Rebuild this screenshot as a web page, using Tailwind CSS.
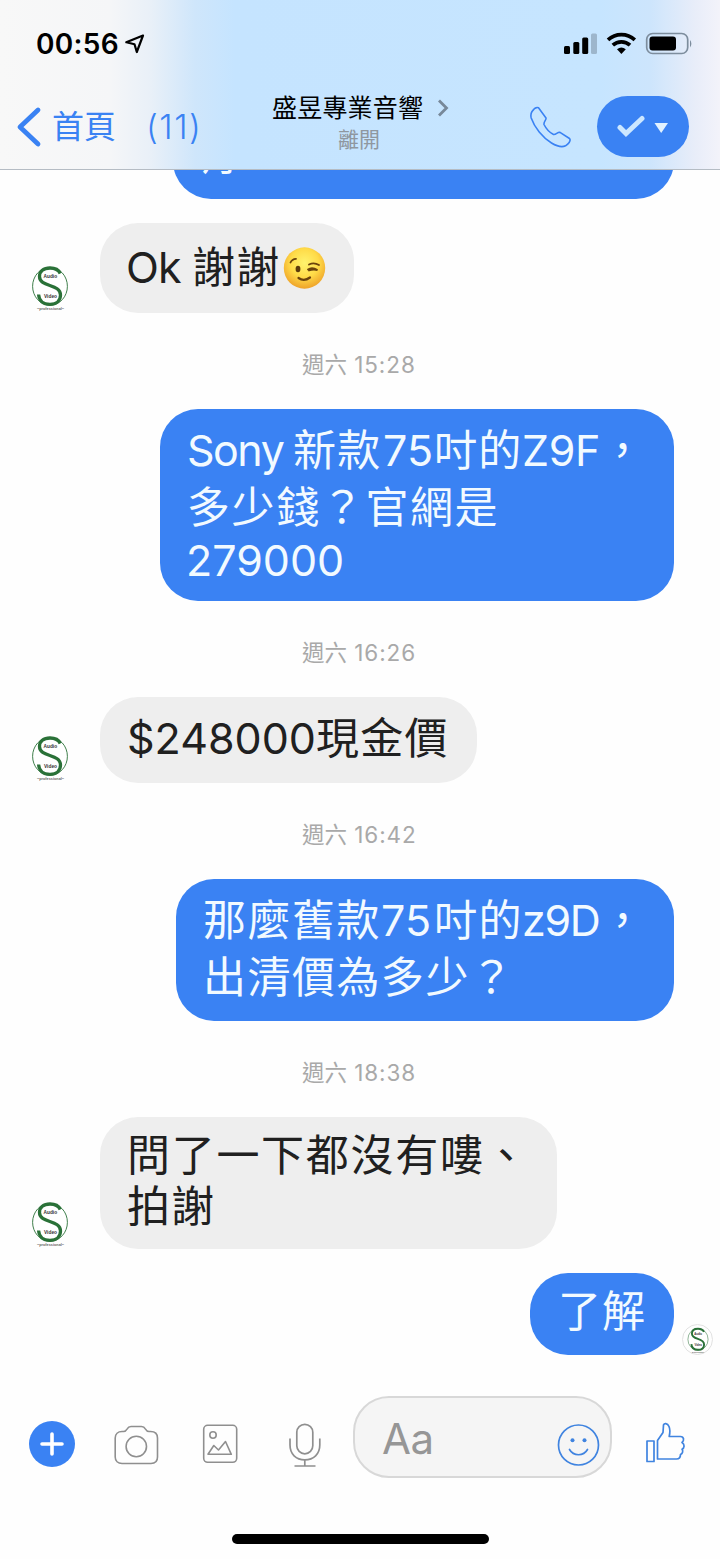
<!DOCTYPE html>
<html lang="zh-TW">
<head>
<meta charset="utf-8">
<title>盛昱專業音響</title>
<script src="https://cdn.jsdelivr.net/npm/@tailwindcss/browser@4"></script>
</head>
<body class="bg-[#fefefe]">
<div class="w-[720px] h-[1559px] flex flex-col overflow-hidden font-['Inter','Noto_Sans_CJK_TC',sans-serif] text-[#202020]">
  <header class="h-[170px] shrink-0 flex flex-col border-b border-[#b5bcc4] bg-[linear-gradient(90deg,#f8f8f8_0px,#f5f6f8_110px,#e9f0f8_150px,#cfe6fb_195px,#c5e4ff_235px,#c6e5ff_600px,#cde5fc_650px,#e8edf9_695px,#f3f3fa_720px)]">
    <div class="h-[88px] flex items-center pl-[36px] pr-[27px]">
      <span class="text-[28px] font-semibold text-black leading-[32px] w-[87px] whitespace-nowrap tracking-[0.3px]">00:56</span>
      <svg class="ml-[1px]" width="22" height="22" viewBox="0 0 22 22" fill="none" stroke="#000" stroke-width="2.200" stroke-linejoin="round"><path d="M19 2.500L2.300 9.300L10.500 11.200L12.800 19Z"/></svg>
      <svg class="ml-auto" width="129" height="26" viewBox="0 -1 129 26">
        <g fill="#000"><rect x="0" y="14" width="6" height="8" rx="1.500"/><rect x="9.300" y="10" width="6" height="12" rx="1.500"/><rect x="18.200" y="5.500" width="6" height="16.500" rx="1.500"/></g>
        <rect x="27" y="1.500" width="6" height="20.500" rx="1.500" fill="#9db6cc"/>
        <g fill="none" stroke="#000" stroke-width="3.700"><path d="M44 7.800A20 20 0 0 1 70.800 7.800"/><path d="M48.800 13.200A12.700 12.700 0 0 1 66 13.200"/></g>
        <path d="M53 17.200A7 7 0 0 1 61.800 17.200L57.400 22Z" fill="#000"/>
        <rect x="82.700" y="1.500" width="41" height="20" rx="6" fill="none" stroke="#7d8d9d" stroke-width="1.700"/>
        <rect x="85.500" y="4.500" width="26.500" height="14" rx="3" fill="#000"/>
        <path d="M126 8Q128.800 11.500 126 15.500Z" fill="#7d8d9d"/>
      </svg>
    </div>
    <div class="h-[78px] flex items-center pl-[16px] pr-[31px]">
      <svg class="shrink-0" width="26" height="42" viewBox="0 0 26 42" fill="none" stroke="#3a82f3" stroke-width="4.800" stroke-linecap="round" stroke-linejoin="round"><path d="M22 4L4 21L22 38"/></svg>
      <div class="w-[216px] pl-[10px] flex text-[32px] leading-[40px] text-[#3a82f3] whitespace-nowrap"><span class="w-[94px]">首頁</span><span class="font-light text-[34px] tracking-[1.5px]">(11)</span></div>
      <div class="w-[202px] pl-[14px] -mt-[8px] flex flex-col">
        <div class="flex items-center gap-[14px] h-[34px] text-[25px] leading-[34px] text-black whitespace-nowrap tracking-[0.2px]"><span>盛昱專業音響</span>
          <svg width="12" height="18" viewBox="0 0 12 18" fill="none" stroke="#778899" stroke-width="2.800"><path d="M2 1.500L9.500 9L2 16.500"/></svg>
        </div>
        <div class="pl-[66px] text-[21px] h-[30px] leading-[30px] text-[#8f979f] whitespace-nowrap">離開</div>
      </div>
      <svg class="ml-auto" width="43" height="43" viewBox="0 0 43 43" fill="none" stroke="#3a82f3" stroke-width="1.600" stroke-linejoin="round"><path d="M3 5.500C5 2.500 7.500 1 9.500 1.800L17 12C17.500 14 14.500 15.500 15 18.500C17 22.500 20.500 26.500 24.500 28.500C27 29 28.500 25.800 31 26.300L40.500 32.500C42.500 35 39 38 36.500 39.800C33 41.500 28 40.300 22.500 37C13.500 31.500 5.500 21.500 2.200 12C1.500 9 1.700 7.500 3 5.500Z"/></svg>
      <div class="ml-[25px] w-[92px] h-[61px] -mt-[1px] rounded-full bg-[#3a82f3] flex items-center">
        <svg class="ml-[19px]" width="54" height="24" viewBox="0 0 54 24"><path d="M4 12.500L10 18.500L26 3.500" fill="none" stroke="#cce7ff" stroke-width="5" stroke-linecap="round"/><path d="M38.500 8H52L45.200 18Z" fill="#e2f2ff"/></svg>
      </div>
    </div>
  </header>

  <main class="h-[1226px] shrink-0 flex flex-col overflow-hidden text-[43px] leading-[54px] whitespace-nowrap pr-[46px]">
    <div class="self-end w-[501px] h-[110px] -mt-[81px] shrink-0 rounded-[38px] bg-[#3a82f3] text-[#f2faff] pl-[23px] pt-[38px]">有</div>

    <div class="mt-[24px] h-[90px] shrink-0 flex">
      <svg class="ml-[30px] mt-[42px]" width="40" height="50" viewBox="0 0 40 50">
        <g id="logo">
          <ellipse cx="20" cy="21.300" rx="17.400" ry="18.900" fill="#fff" stroke="#2a7138" stroke-width=".9"/>
          <path d="M30.300 8.500C28.500 4.500 25 3 20 3C13.500 3 9.500 6.500 9.500 11.500C9.500 22.500 30.500 18.500 30.500 30C30.500 35.500 26.500 39.300 20 39.300C13 39.300 9 35.500 8.600 29.500" fill="none" stroke="#2a7138" stroke-width="3.300"/>
          <text x="13.500" y="13.300" font-size="4.800" font-weight="700" font-family="Liberation Sans" fill="#333">Audio</text>
          <text x="14" y="32.600" font-size="4.800" font-weight="700" font-family="Liberation Sans" fill="#333">Video</text>
          <text x="7" y="45.300" font-size="3.800" font-weight="700" font-family="Liberation Sans" fill="#666">~professional~</text>
        </g>
      </svg>
      <div class="ml-[30px] w-[254px] rounded-[38px] bg-[#eee] flex pl-[26px] pt-[17px]"><span class="w-[66px] tracking-[-1px]">Ok</span><span class="tracking-[1.3px]">謝謝</span>
        <svg class="ml-[2px] mt-[7px]" width="43" height="43" viewBox="0 0 43 43">
          <defs><radialGradient id="face" cx=".5" cy=".38" r=".62"><stop offset="0" stop-color="#fff36e"/><stop offset=".55" stop-color="#ffdb48"/><stop offset="1" stop-color="#eea229"/></radialGradient></defs>
          <circle cx="21.500" cy="21" r="20.700" fill="url(#face)"/>
          <ellipse cx="15" cy="22" rx="2.400" ry="3.300" fill="#5c3a0c"/>
          <g fill="none" stroke="#6b430c" stroke-width="1.800" stroke-linecap="round"><path d="M7.500 15.500Q9 12 13 11.800"/><path d="M26 17.500Q31 15 36 18"/><path d="M25 22.500Q29 19.500 34.500 23Q30 22 26 23.500"/><path d="M15.500 31Q21 35 27 30.500" stroke-width="2.200"/></g>
        </svg>
      </div>
    </div>

    <div class="mt-[36px] h-[32px] leading-[32px] text-[22.500px] text-[#a9a9a9] pl-[302px]">週六<span class="tracking-[0.9px]"> 15:28</span></div>

    <div class="mt-[28px] self-end w-[514px] h-[192px] shrink-0 rounded-[38px] bg-[#3a82f3] text-[#f2faff] pl-[27px] pt-[14px]">
      <div class="h-[57px] flex tracking-[1.300px]"><span class="w-[106px] tracking-[-1.500px]">Sony</span><span class="w-[90px]">新款</span><span class="w-[51px] tracking-[0px]">75</span><span class="w-[88px]">吋的</span><span class="w-[79px] tracking-[-0.300px]">Z9F</span><span>，</span></div>
      <div class="h-[53px] tracking-[1.600px]">多少錢？官網是</div>
      <div class="h-[54px] -ml-[1px]">279000</div>
    </div>

    <div class="mt-[36px] h-[32px] leading-[32px] text-[22.500px] text-[#a9a9a9] pl-[302px]">週六<span class="tracking-[0.9px]"> 16:26</span></div>

    <div class="mt-[28px] h-[86px] shrink-0 flex">
      <svg class="ml-[30px] mt-[38px]" width="40" height="50" viewBox="0 0 40 50"><use href="#logo"/></svg>
      <div class="ml-[30px] w-[377px] rounded-[38px] bg-[#eee] pl-[27px] pt-[14px] flex"><span class="w-[189px]">$248000</span><span class="tracking-[1.300px]">現金價</span></div>
    </div>

    <div class="mt-[36px] h-[32px] leading-[32px] text-[22.500px] text-[#a9a9a9] pl-[302px]">週六<span class="tracking-[0.9px]"> 16:42</span></div>

    <div class="mt-[28px] self-end w-[498px] h-[142px] shrink-0 rounded-[38px] bg-[#3a82f3] text-[#f2faff] pl-[27px] pt-[14px]">
      <div class="h-[57px] flex tracking-[1.500px]"><span class="w-[178px]">那麼舊款</span><span class="w-[53px] tracking-[0px]">75</span><span class="w-[88px]">吋的</span><span class="w-[79px] tracking-[-1.300px]">z9D</span><span>，</span></div>
      <div class="h-[53px] tracking-[1.500px]">出清價為多少？</div>
    </div>

    <div class="mt-[36px] h-[32px] leading-[32px] text-[22.500px] text-[#a9a9a9] pl-[302px]">週六<span class="tracking-[0.9px]"> 18:38</span></div>

    <div class="mt-[28px] h-[132px] shrink-0 flex">
      <svg class="ml-[30px] mt-[84px]" width="40" height="50" viewBox="0 0 40 50"><use href="#logo"/></svg>
      <div class="ml-[30px] w-[457px] rounded-[38px] bg-[#eee] pl-[27px] pt-[11px]">
        <div class="h-[51px] tracking-[1.700px]">問了一下都沒有嘍、</div>
        <div class="h-[54px] tracking-[1px]">拍謝</div>
      </div>
    </div>

    <div class="mt-[24px] -mr-[46px] h-[82px] shrink-0 flex pl-[530px]">
      <div class="w-[144px] rounded-[38px] bg-[#3a82f3] text-[#f2faff] pl-[28px] pt-[11px] tracking-[1px]">了解</div>
      <div class="ml-[8px] mt-[51px] w-[31px] h-[31px] shrink-0 rounded-full border border-[#e2e2e2] overflow-hidden flex justify-center items-start"><svg class="mt-[2px] shrink-0" width="24" height="29" viewBox="0 0 40 50"><use href="#logo"/></svg></div>
    </div>
  </main>

  <footer class="grow flex flex-col">
    <div class="h-[82px] flex pl-[29px]">
      <div class="mt-[25px] w-[46px] h-[46px] rounded-full bg-[#3a82f3] flex items-center justify-center"><svg width="24" height="24" stroke="#fff" stroke-width="3.600" stroke-linecap="round"><path d="M12 2V22M2 12H22"/></svg></div>
      <svg class="ml-[39px] mt-[29px]" width="45" height="40" viewBox="0 0 45 40" fill="none" stroke="#8f8f8f" stroke-width="1.600" stroke-linejoin="round"><path d="M8 6.500H9.500C11.500 6.500 12.200 5.500 13.200 3.800C14 2.300 15 1.500 17 1.500H27.500C29.500 1.500 30.500 2.300 31.300 3.800C32.300 5.500 33 6.500 35 6.500H36.500C41 6.500 43.500 9 43.500 13V32C43.500 36 41 38.500 37 38.500H8C4 38.500 1.200 36 1.200 32V13C1.200 9 4 6.500 8 6.500Z"/><circle cx="22.300" cy="21.500" r="10.200"/></svg>
      <svg class="ml-[43px] mt-[28px]" width="36" height="40" viewBox="0 0 36 40" fill="none" stroke="#8f8f8f" stroke-width="1.600" stroke-linejoin="round"><rect x="1.700" y="1.300" width="33" height="37" rx="4"/><circle cx="11" cy="11" r="3.200"/><path d="M6 30.300L11.800 21.500L16.500 26L23.500 17.500L29.300 30.300Z"/></svg>
      <svg class="ml-[50px] mt-[27px]" width="34" height="45" viewBox="0 0 34 45" fill="none" stroke="#8f8f8f" stroke-width="1.700"><rect x="8.800" y="1.300" width="16" height="29.500" rx="8"/><path d="M2 15.500V22C2 31 8 36.800 16.800 36.800S31.800 31 31.800 22V15.500M16.800 37V43M6.500 43H27.500"/></svg>
      <div class="ml-[31px] w-[259px] h-[82px] rounded-[36px] border-2 border-[#d8d8d8] bg-[#f5f5f5] flex">
        <span class="ml-[27px] mt-[14px] w-[175px] text-[42px] leading-[54px] tracking-[-0.5px] text-[#969696]">Aa</span>
        <svg class="mt-[26px]" width="43" height="43" viewBox="0 0 43 43" fill="none" stroke="#4084e0" stroke-width="1.700"><circle cx="21.500" cy="21" r="20"/><g fill="#4084e0" stroke="none"><circle cx="15.500" cy="16.300" r="2"/><circle cx="27.500" cy="16.300" r="2"/></g><path d="M12.500 25.500C16.500 32.500 26.500 32.500 30.500 25.500" stroke-linecap="round"/></svg>
      </div>
      <svg class="ml-[33px] mt-[26px]" width="41" height="42" viewBox="0 0 41 42" fill="none" stroke="#4084e0" stroke-width="1.700" stroke-linejoin="round"><path d="M2 19H9V39.500H2Z"/><path d="M12.500 18.500L18 10.500L18.500 3C18.800 1 22.500 1 24 4.500C25.500 8 25 11 24.200 14.500H35.500C39 14.500 39.500 18.500 37 20.500C40 22.500 39.500 26 37 27.200C38.500 29 37.500 31.500 35.500 32.500C35.500 35 34 37 31.500 37H12.500Z"/></svg>
    </div>
    <div class="mt-[56px] ml-[232px] w-[257px] h-[10px] rounded-full bg-black"></div>
  </footer>
</div>
</body>
</html>
